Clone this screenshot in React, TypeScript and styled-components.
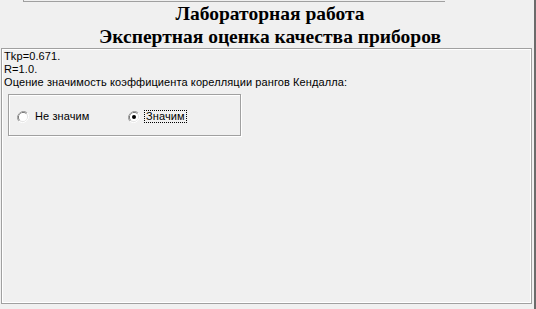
import React from 'react'
import styled, { createGlobalStyle } from 'styled-components'

const GlobalStyle = createGlobalStyle`
	html, body {
		margin: 0;
		padding: 0;
		background: #f0f0f0;
		overflow: hidden;
	}
`

const Radio: React.FC<{ checked?: boolean }> = ({ checked }) => (
	<svg width="12" height="12" viewBox="0 0 12 12">
		<path d="M10.2 1.8 A6 6 0 0 0 1.8 10.2" stroke="#a0a0a0" strokeWidth="1" fill="none" />
		<path d="M1.8 10.2 A6 6 0 0 0 10.2 1.8" stroke="#ffffff" strokeWidth="1" fill="none" />
		<path d="M9.5 2.5 A5 5 0 0 0 2.5 9.5" stroke="#696969" strokeWidth="1" fill="none" />
		<path d="M2.5 9.5 A5 5 0 0 0 9.5 2.5" stroke="#e3e3e3" strokeWidth="1" fill="none" />
		<circle cx="6" cy="6" r="4" fill="#ffffff" />
		{checked && <circle cx="6" cy="6" r="2" fill="#000000" />}
	</svg>
)

const App: React.FC = () => (
	<StyledWindow>
		<GlobalStyle />
		<StyledTopStub />
		<StyledTitle>
			<div>Лабораторная работа</div>
			<div>Экспертная оценка качества приборов</div>
		</StyledTitle>
		<StyledPanel>
			<StyledLine>Tkp=0.671.</StyledLine>
			<StyledLine>R=1.0.</StyledLine>
			<StyledLine>Оцение значимость коэффициента корелляции рангов Кендалла:</StyledLine>
			<StyledGroupBox>
				<StyledOption>
					<Radio />
					<StyledCaption>Не значим</StyledCaption>
				</StyledOption>
				<StyledOption>
					<Radio checked />
					<StyledCaption focused>Значим</StyledCaption>
				</StyledOption>
			</StyledGroupBox>
		</StyledPanel>
	</StyledWindow>
)

const StyledWindow = styled.div`
	width: 534px;
	height: 309px;
	border-right: 2px solid #6b6b6b;
	background: #f0f0f0;
	box-sizing: content-box;
`

const StyledTopStub = styled.div`
	margin-left: 23px;
	width: 421px;
	height: 1px;
	border-left: 1px solid #a0a0a0;
	border-bottom: 1px solid #a0a0a0;
`

const StyledTitle = styled.div`
	height: 46px;
	padding-left: 6px;
	font-family: 'Liberation Serif', 'Times New Roman', serif;
	font-weight: bold;
	font-size: 19.5px;
	line-height: 23px;
	text-align: center;
	color: #000;
`

const StyledPanel = styled.div`
	margin-left: 1px;
	width: 531px;
	height: 256px;
	box-sizing: border-box;
	border: 1px solid #a0a0a0;
	box-shadow: inset 1px 1px 0 #ffffff, inset -1px -1px 0 #ffffff;
	padding: 1px 2px;
	font-family: 'Liberation Sans', Arial, sans-serif;
	font-size: 11px;
	letter-spacing: 0.1px;
	color: #000;
`

const StyledLine = styled.div`
	height: 13px;
	line-height: 13px;
	white-space: nowrap;
`

const StyledGroupBox = styled.div`
	margin: 5px 0 0 4px;
	width: 233px;
	height: 42px;
	box-sizing: border-box;
	border: 1px solid #a0a0a0;
	box-shadow: inset 1px 1px 0 #ffffff, 1px 1px 0 #ffffff;
	display: flex;
	align-items: center;
	padding: 3px 0 0 8px;
`

const StyledOption = styled.div`
	width: 111px;
	display: flex;
	align-items: center;
	gap: 4px;

	svg {
		flex: none;
	}
`

const StyledCaption = styled.span<{ focused?: boolean }>`
	line-height: 11px;
	padding: 0 1px;
	border: 1px dotted ${(p) => (p.focused ? '#000' : 'transparent')};
`

export default App
